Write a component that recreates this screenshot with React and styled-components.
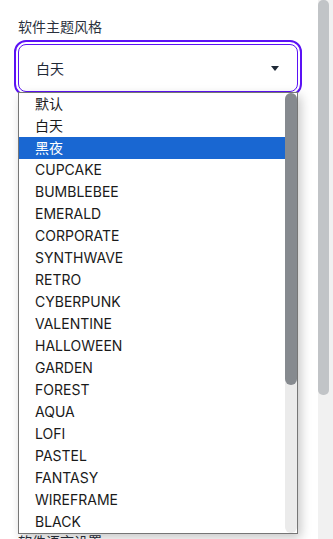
import React from 'react';
import styled, { createGlobalStyle } from 'styled-components';

const GlobalStyle = createGlobalStyle`
  html, body {
    margin: 0;
    padding: 0;
    background: #ffffff;
    overflow: hidden;
  }
  body {
    font-family: Inter, "Noto Sans CJK SC", sans-serif;
  }
`;

const Page = styled.div`
  display: flex;
  height: 539px;
  overflow: hidden;
`;

const Main = styled.div`
  flex: 1;
  box-sizing: border-box;
  padding: 17px 18px 0;
  overflow: hidden;
`;

const ScrollTrack = styled.div`
  flex: 0 0 ${(p) => p.width}px;
  display: flex;
  flex-direction: column;
  background: ${(p) => p.track};
  border-radius: ${(p) => p.trackRadius || 0}px;
`;

const ScrollThumb = styled.div`
  width: ${(p) => p.width}px;
  background: ${(p) => p.color};
  border-radius: ${(p) => p.radius}px;
`;

const Form = styled.div`
  display: flex;
  flex-direction: column;
  gap: 28px;
  width: 280px;
`;

const Field = styled.div`
  display: flex;
  flex-direction: column;
`;

const Label = styled.div`
  font-size: 14px;
  line-height: 20px;
  color: #2a303c;
  padding-bottom: 7px;
`;

const SelectWrap = styled.div`
  position: relative;
`;

const SelectBox = styled.div`
  box-sizing: border-box;
  height: 48px;
  display: flex;
  align-items: center;
  justify-content: space-between;
  padding: 0 17px;
  border: 1px solid ${(p) => (p.focused ? '#5b12f5' : '#d1d5db')};
  border-radius: 8px;
  outline: ${(p) => (p.focused ? '2px solid #5b12f5' : 'none')};
  outline-offset: 2px;
  font-size: 14px;
  color: #1f2937;
`;

const Caret = styled.svg`
  width: 8px;
  height: 5px;
  margin-right: 1px;
`;

const Dropdown = styled.div`
  position: absolute;
  top: 48px;
  left: 0;
  z-index: 10;
  box-sizing: border-box;
  display: flex;
  width: 280px;
  height: 442px;
  border: 1px solid #767676;
  background: #ffffff;
  box-shadow: 3px 4px 10px rgba(0, 0, 0, 0.22);
`;

const OptionList = styled.ul`
  flex: 1;
  margin: 0;
  padding: 0;
  list-style: none;
  overflow: hidden;
`;

const Option = styled.li`
  height: 22px;
  line-height: 22px;
  padding-left: 16px;
  font-size: 14px;
  color: ${(p) => (p.selected ? '#ffffff' : '#1a1a1a')};
  background: ${(p) => (p.selected ? '#1967d2' : 'transparent')};
  white-space: nowrap;
`;

const themes = [
  '默认', '白天', '黑夜', 'CUPCAKE', 'BUMBLEBEE', 'EMERALD', 'CORPORATE',
  'SYNTHWAVE', 'RETRO', 'CYBERPUNK', 'VALENTINE', 'HALLOWEEN', 'GARDEN',
  'FOREST', 'AQUA', 'LOFI', 'PASTEL', 'FANTASY', 'WIREFRAME', 'BLACK',
  'LUXURY', 'DRACULA', 'CMYK', 'AUTUMN', 'BUSINESS', 'ACID', 'LEMONADE',
  'NIGHT', 'COFFEE', 'WINTER',
];

const fields = [
  { label: '编辑器字体大小', value: '14' },
  { label: '编辑器主题', value: '默认' },
  { label: '自动保存', value: '开启' },
  { label: '预览模式', value: '分屏' },
  { label: '软件语言设置', value: '简体中文' },
];

const CaretIcon = () => (
  <Caret viewBox="0 0 8 5">
    <path d="M0 0 L8 0 L4 5 Z" fill="#1f2937" />
  </Caret>
);

export default function App() {
  return (
    <>
      <GlobalStyle />
      <Page>
        <Main>
          <Form>
            <Field>
              <Label>软件主题风格</Label>
              <SelectWrap>
                <SelectBox focused>
                  <span>白天</span>
                  <CaretIcon />
                </SelectBox>
                <Dropdown>
                  <OptionList>
                    {themes.map((t) => (
                      <Option key={t} selected={t === '黑夜'}>{t}</Option>
                    ))}
                  </OptionList>
                  <ScrollTrack width={12} track="#ebebeb" trackRadius={6}>
                    <ScrollThumb width={12} color="#868a8f" radius={6} style={{ height: 292 }} />
                  </ScrollTrack>
                </Dropdown>
              </SelectWrap>
            </Field>
            {fields.map((f) => (
              <Field key={f.label}>
                <Label>{f.label}</Label>
                <SelectBox>
                  <span>{f.value}</span>
                  <CaretIcon />
                </SelectBox>
              </Field>
            ))}
          </Form>
        </Main>
        <ScrollTrack width={15} track="#f1f1f1">
          <ScrollThumb width={11} color="#c1c4c7" radius={5} style={{ height: 395 }} />
        </ScrollTrack>
      </Page>
    </>
  );
}
